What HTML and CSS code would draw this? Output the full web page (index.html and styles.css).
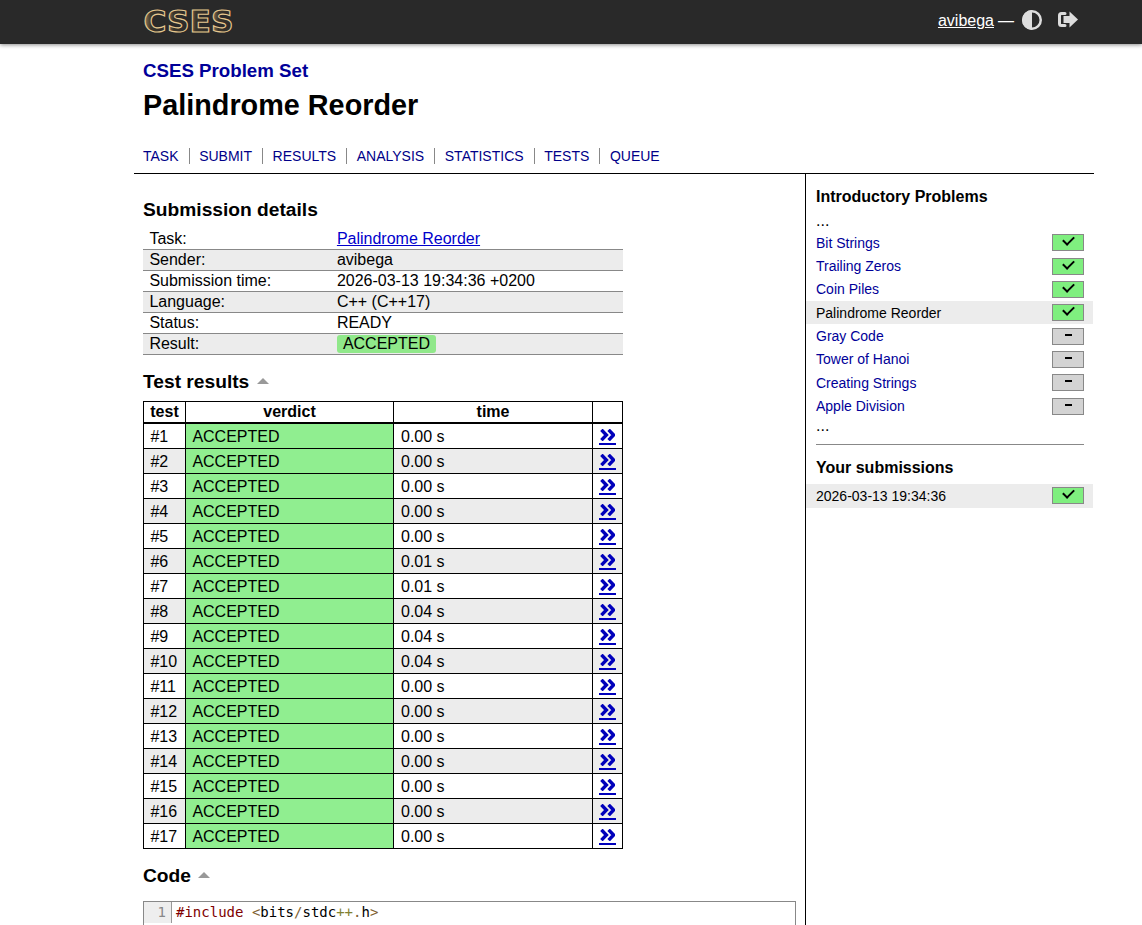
FILE: index.html
```html
<!DOCTYPE html>
<html lang="en">
<head>
    <meta charset="UTF-8">
    <title>CSES - Palindrome Reorder</title>
    <link rel="stylesheet" href="styles.css">
</head>
<body>
    <div class="header">
        <div class="skeleton header-row">
            <a class="logo" href="#">
                <svg width="96" height="36" viewBox="0 0 96 36">
                    <defs>
                        <linearGradient id="gold" gradientUnits="userSpaceOnUse" x1="0" y1="0" x2="22.500" y2="0" spreadMethod="repeat">
                            <stop offset="0" stop-color="#a98f62"/>
                            <stop offset="0.350" stop-color="#3a342a"/>
                            <stop offset="1" stop-color="#2a2a2a"/>
                        </linearGradient>
                    </defs>
                    <text x="0.500" y="28" textLength="90" lengthAdjust="spacingAndGlyphs" class="logo-text">CSES</text>
                </svg>
            </a>
            <div class="controls">
                <a class="account" href="#">avibega</a>
                <span class="dash">&mdash;</span>
                <a class="control" href="#">
                    <svg width="22" height="22" viewBox="0 0 22 22">
                        <circle cx="11" cy="10" r="8.750" fill="none" stroke="#ddd" stroke-width="2.500"/>
                        <path d="M11 0a10 10 0 0 0 0 20z" fill="#ddd"/>
                    </svg>
                </a>
                <a class="control" href="#">
                    <svg width="22" height="20" viewBox="0 0 22 20">
                        <path d="M8 3.500H4.500Q2.500 3.500 2.500 5.500V13.500Q2.500 15.500 4.500 15.500H8" fill="none" stroke="#ddd" stroke-width="3" stroke-linecap="round"/>
                        <path d="M12.500 1.500L21 9.500L12.500 17.500V13H6.500V6H12.500Z" fill="#ddd"/>
                    </svg>
                </a>
            </div>
        </div>
    </div>

    <div class="skeleton">
        <div class="title-block">
            <h2 class="set-name"><a href="#">CSES Problem Set</a></h2>
            <h1>Palindrome Reorder</h1>
            <ul class="nav">
                <li><a href="#">TASK</a></li>
                <li><a href="#">SUBMIT</a></li>
                <li><a href="#">RESULTS</a></li>
                <li><a href="#">ANALYSIS</a></li>
                <li><a href="#">STATISTICS</a></li>
                <li><a href="#">TESTS</a></li>
                <li><a href="#">QUEUE</a></li>
            </ul>
        </div>

        <div class="columns">
            <div class="content">
                <h3 class="first">Submission details</h3>
                <table class="details">
                    <tr><td>Task:</td><td><a href="#">Palindrome Reorder</a></td></tr>
                    <tr><td>Sender:</td><td>avibega</td></tr>
                    <tr><td>Submission time:</td><td>2026-03-13 19:34:36 +0200</td></tr>
                    <tr><td>Language:</td><td>C++ (C++17)</td></tr>
                    <tr><td>Status:</td><td>READY</td></tr>
                    <tr><td>Result:</td><td><span class="verdict-tag">ACCEPTED</span></td></tr>
                </table>

                <h3 class="toggle">Test results <span class="arrow"></span></h3>
                <table class="results">
                    <thead>
                        <tr><th class="col-test">test</th><th class="col-verdict">verdict</th><th class="col-time">time</th><th class="col-link"></th></tr>
                    </thead>
                    <tbody id="rows"></tbody>
                </table>

                <h3 class="toggle code-title">Code <span class="arrow"></span></h3>
                <div class="code-box">
                    <div class="line-no">1</div>
                    <pre class="code"><span class="pre">#include</span> <span class="op">&lt;</span>bits<span class="op">/</span>stdc<span class="plus">++</span><span class="op">.</span>h<span class="op">&gt;</span></pre>
                </div>
            </div>

            <div class="sidebar">
                <h4>Introductory Problems</h4>
                <div class="dots">...</div>
                <ul class="task-list">
                    <li><a href="#">Bit Strings</a><span class="score ok"></span></li>
                    <li><a href="#">Trailing Zeros</a><span class="score ok"></span></li>
                    <li><a href="#">Coin Piles</a><span class="score ok"></span></li>
                    <li class="current"><span>Palindrome Reorder</span><span class="score ok"></span></li>
                    <li><a href="#">Gray Code</a><span class="score none"></span></li>
                    <li><a href="#">Tower of Hanoi</a><span class="score none"></span></li>
                    <li><a href="#">Creating Strings</a><span class="score none"></span></li>
                    <li><a href="#">Apple Division</a><span class="score none"></span></li>
                </ul>
                <div class="dots dots-end">...</div>
                <hr>
                <h4>Your submissions</h4>
                <ul class="task-list">
                    <li class="current"><span>2026-03-13 19:34:36</span><span class="score ok"></span></li>
                </ul>
            </div>
        </div>
    </div>

    <script>
        const times = ['0.00', '0.00', '0.00', '0.00', '0.00', '0.01', '0.01', '0.04', '0.04', '0.04', '0.00', '0.00', '0.00', '0.00', '0.00', '0.00', '0.00'];
        const chevrons = '<svg width="15" height="12" viewBox="0 0 15 12"><path d="M1.400 0.800L6.400 6L1.400 11.200M8.600 0.800L13.600 6L8.600 11.200" fill="none" stroke="#0000bb" stroke-width="3.400"/></svg>';
        document.getElementById('rows').innerHTML = times.map((t, i) =>
            `<tr><td class="num-cell">#${i + 1}</td><td class="ok-cell">ACCEPTED</td><td>${t} s</td><td class="link-cell"><a href="#">${chevrons}</a></td></tr>`
        ).join('');
    </script>
</body>
</html>
```

FILE: styles.css
```css
* {
    box-sizing: border-box;
}

html, body {
    height: 925px;
    overflow: hidden;
}

body {
    margin: 0;
    font-family: "Liberation Sans", Arial, sans-serif;
    font-size: 16px;
    color: #000;
    background: #fff;
}

a {
    color: #0000aa;
}

/* Header */
.header {
    height: 44px;
    background: #292929;
    box-shadow: 0 1px 4px rgba(0, 0, 0, 0.45);
}

.skeleton {
    width: 960px;
    margin-left: 134px;
}

.header-row {
    display: flex;
    align-items: center;
    justify-content: space-between;
    height: 44px;
    padding-left: 9px;
}

.logo {
    display: block;
    height: 36px;
}

.logo-text {
    font-family: "DejaVu Sans", sans-serif;
    font-weight: 700;
    font-size: 30px;
    fill: url(#gold);
    stroke: #e6c88f;
    stroke-width: 1.100;
}

.controls {
    display: flex;
    align-items: center;
    color: #fff;
    margin-right: 15px;
    margin-top: -3px;
}

.account {
    color: #fff;
}

.dash {
    margin-left: 4px;
    margin-right: 7px;
}

.control {
    display: block;
    height: 22px;
    margin-right: 14px;
}

.control:last-child {
    margin-right: 0;
}

/* Title */
.title-block {
    padding: 16px 9px 0;
}

.set-name {
    margin: 0;
    font-size: 18.700px;
    line-height: 21px;
}

.set-name a {
    text-decoration: none;
    color: #000099;
}

h1 {
    margin: 8px 0 0;
    font-size: 28.800px;
    line-height: 32px;
}

.nav {
    display: flex;
    list-style: none;
    margin: 27px 0 0;
    padding: 0;
    font-size: 14px;
    height: 25px;
}

.nav li {
    height: 16px;
    margin-right: 9.600px;
    padding-right: 10px;
    border-right: 1px solid #888;
    line-height: 16px;
}

.nav li:last-child {
    border-right: none;
}

.nav a {
    text-decoration: none;
    color: #000088;
}

/* Columns */
.columns {
    display: flex;
    border-top: 1px solid #000;
    height: 760px;
}

.content {
    width: 672px;
    padding: 0 9px;
    border-right: 1px solid #000;
}

h3 {
    margin: 0;
    font-size: 19.200px;
    line-height: 22px;
}

h3.first {
    margin-top: 25px;
}

.details {
    border-collapse: collapse;
    width: 480px;
    margin-top: 7px;
}

.details td {
    padding: 0 6.400px;
    height: 21px;
    line-height: 18px;
    border-bottom: 1px solid #888;
}

.details td:first-child {
    width: 187.500px;
}

.details tr:first-child td {
    padding-top: 2px;
}

.details tr:nth-child(even) {
    background: #ececec;
}

.details a {
    color: #0000cc;
}

.verdict-tag {
    display: inline-block;
    padding: 0 6px;
    line-height: 18px;
    background: #90e88a;
    border-radius: 3px;
}

.toggle {
    margin-top: 16px;
}

.arrow {
    display: inline-block;
    vertical-align: 4px;
    margin-left: 2px;
    border-left: 6px solid transparent;
    border-right: 6px solid transparent;
    border-bottom: 6px solid #999;
}

.results {
    border-collapse: collapse;
    width: 480px;
    margin-top: 8px;
    table-layout: fixed;
}

.results th,
.results td {
    border: 1px solid #000;
    height: 25px;
    padding: 2px 7px 0;
}

.results th {
    height: 22px;
    border-bottom: 2px solid #000;
    padding: 0;
}

.col-test { width: 42px; }
.col-verdict { width: 208px; }
.col-time { width: 199px; }
.col-link { width: 30px; }

.results tbody tr:nth-child(even) {
    background: #ececec;
}

.results .num-cell,
.results .ok-cell {
    padding-left: 6.400px;
}

.results .ok-cell {
    background: #90ee90;
}

.results .link-cell {
    padding: 0;
}

.link-cell a {
    display: block;
    width: 17px;
    height: 16px;
    margin: 2px auto 0;
    padding: 0 1px;
    border-bottom: 2px solid #0000bb;
}

.link-cell svg {
    display: block;
}

.code-title {
    margin-top: 16px;
}

.code-box {
    display: flex;
    width: 653px;
    height: 40px;
    margin-top: 14px;
    border: 1px solid #888;
    font-family: "DejaVu Sans Mono", monospace;
    font-size: 14px;
    line-height: 21px;
}

.line-no {
    width: 28px;
    height: 21px;
    padding-right: 5px;
    text-align: right;
    color: #888;
    background: #eee;
    border-right: 1px solid #999;
}

.code {
    margin: 0 0 0 4px;
    font: inherit;
}

.pre { color: #800000; }
.op { color: #806030; }
.plus { color: #808030; }

/* Sidebar */
.sidebar {
    flex: 1;
    padding-top: 13px;
}

h4 {
    margin: 0 10px;
    font-size: 16px;
    line-height: 19px;
}

.dots {
    margin: 6px 10px 0;
    line-height: 18px;
}

.dots-end {
    margin-top: -0.500px;
}

.task-list {
    list-style: none;
    margin: 1px 0 0;
    padding: 0;
    font-size: 14px;
}

.task-list li {
    display: flex;
    align-items: center;
    justify-content: space-between;
    height: 23.350px;
    margin-right: 1px;
    padding: 0 9px 0 10px;
}

.task-list a {
    text-decoration: none;
    color: #000099;
}

.task-list .current {
    background: #ececec;
}

.score {
    position: relative;
    width: 32px;
    height: 17px;
    border: 1px solid #888;
}

.score.ok {
    background: #7fef7f;
}

.score.ok::after {
    content: "";
    position: absolute;
    left: 10px;
    top: 1px;
    width: 9px;
    height: 5px;
    border-left: 2px solid #000;
    border-bottom: 2px solid #000;
    transform: rotate(-45deg);
}

.score.none {
    background: #d3d3d3;
}

.score.none::after {
    content: "";
    position: absolute;
    left: 12px;
    top: 5px;
    width: 7px;
    height: 2px;
    background: #000;
}

hr {
    margin: 9px 10px 13px;
    border: none;
    border-top: 1px solid #888;
}

h4 + .task-list {
    margin-top: 7px;
}
```
